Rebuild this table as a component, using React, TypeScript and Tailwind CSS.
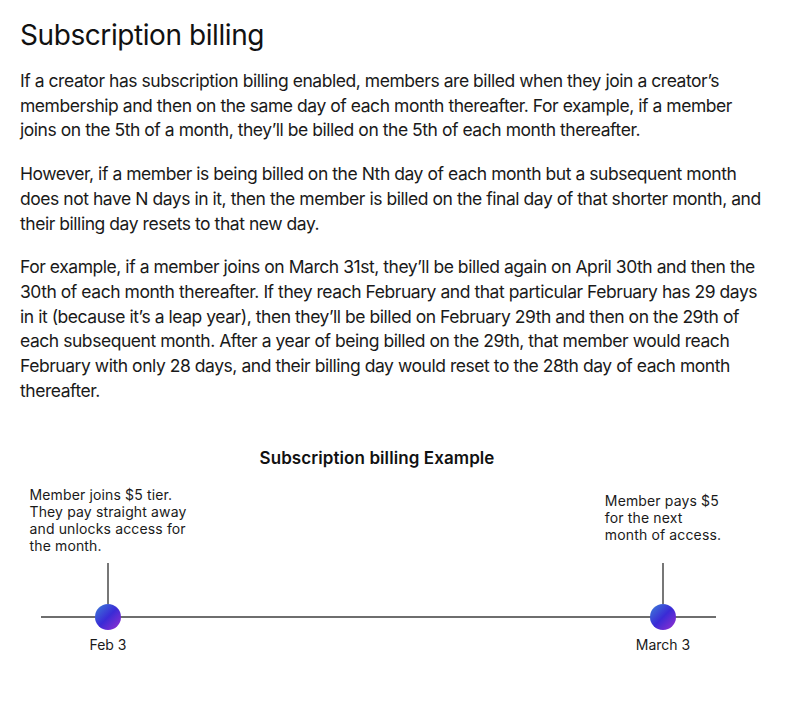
const Marker = ({ note, date, noteClass }: { note: string[]; date: string; noteClass: string }) => {
  return (
    <div className="flex flex-col items-center">
      <div className={`text-[14px] leading-[17px] text-[#1a1a1a] tracking-[0.01em] ${noteClass}`}>
        {note.map((line) => (
          <div key={line}>{line}</div>
        ))}
      </div>
      <div className="w-[1.5px] h-[41px] bg-[#777]" />
      <div className="w-[26px] h-[26px] rounded-full bg-[linear-gradient(135deg,#3d82d8_0%,#3a2bd6_50%,#9a2fcf_100%)]" />
      <div className="mt-[6px] text-[14px] leading-[17px] text-[#1a1a1a]">{date}</div>
    </div>
  );
};

const Para = ({ lines }: { lines: string[] }) => (
  <p className="whitespace-nowrap">
    {lines.map((line, i) => (
      <span key={i}>
        {line}
        {i < lines.length - 1 && <br />}
      </span>
    ))}
  </p>
);

export default function App() {
  return (
    <div className="bg-white min-h-[705px] px-5 pt-[17px] font-['Inter','Liberation_Sans',sans-serif] text-[#1a1a1a]">
      <h1 className="text-[28px] leading-[36px] font-normal tracking-[-0.015em] text-[#111]">Subscription billing</h1>

      <div className="mt-[16px] flex flex-col gap-[19px] text-[17.5px] leading-[24.7px] tracking-[-0.026em]">
        <Para
          lines={[
            'If a creator has subscription billing enabled, members are billed when they join a creator’s',
            'membership and then on the same day of each month thereafter. For example, if a member',
            'joins on the 5th of a month, they’ll be billed on the 5th of each month thereafter.',
          ]}
        />
        <Para
          lines={[
            'However, if a member is being billed on the Nth day of each month but a subsequent month',
            'does not have N days in it, then the member is billed on the final day of that shorter month, and',
            'their billing day resets to that new day.',
          ]}
        />
        <Para
          lines={[
            'For example, if a member joins on March 31st, they’ll be billed again on April 30th and then the',
            '30th of each month thereafter. If they reach February and that particular February has 29 days',
            'in it (because it’s a leap year), then they’ll be billed on February 29th and then on the 29th of',
            'each subsequent month. After a year of being billed on the 29th, that member would reach',
            'February with only 28 days, and their billing day would reset to the 28th day of each month',
            'thereafter.',
          ]}
        />
      </div>

      {/* diagram */}
      <div className="mt-[43px] w-[714px]">
        <div className="text-center text-[17px] leading-[24px] font-semibold tracking-[0.005em] text-[#111]">
          Subscription billing Example
        </div>
        <div className="relative mt-[16px] flex items-end justify-between">
          <div className="absolute left-[21px] right-[18px] bottom-[35px] h-[2px] bg-[#6e6e6e]" />
          <div className="relative w-[176px]">
            <Marker
              note={['Member joins $5 tier.', 'They pay straight away', 'and unlocks access for', 'the month.']}
              date="Feb 3"
              noteClass="mb-[9px]"
            />
          </div>
          <div className="relative w-[142px]">
            <Marker note={['Member pays $5', 'for the next', 'month of access.']} date="March 3" noteClass="mb-[20px]" />
          </div>
        </div>
      </div>
    </div>
  );
}
